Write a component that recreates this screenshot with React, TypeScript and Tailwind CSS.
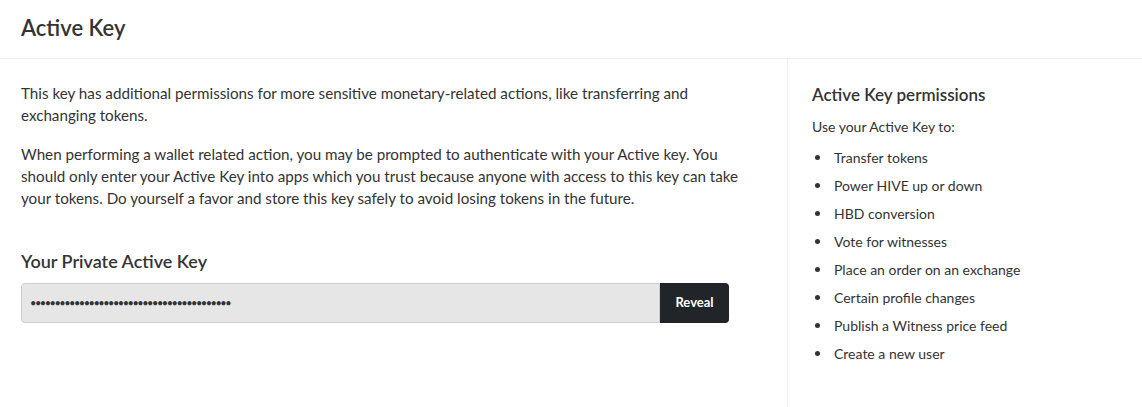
const permissions = [
  'Transfer tokens',
  'Power HIVE up or down',
  'HBD conversion',
  'Vote for witnesses',
  'Place an order on an exchange',
  'Certain profile changes',
  'Publish a Witness price feed',
  'Create a new user',
];

export default function App() {
  return (
    <div
      className="w-[1142px] h-[407px] bg-white text-[#333] overflow-hidden"
      style={{ fontFamily: '"Lato", "Noto Sans", sans-serif' }}
    >
      <div className="h-[59px] border-b border-[#eeeeee] px-[21px] flex items-center">
        <h1 className="text-[22px] font-semibold text-[#333] leading-none -mt-[2px]">Active Key</h1>
      </div>
      <div className="flex h-[348px]">
        <div className="flex-1 px-[21px] pt-[23px]">
          <p className="text-[15.2px] leading-[22px] whitespace-nowrap">
            This key has additional permissions for more sensitive monetary-related actions, like transferring and
            <br />
            exchanging tokens.
          </p>
          <p className="text-[15.2px] leading-[22px] mt-[17px] whitespace-nowrap">
            When performing a wallet related action, you may be prompted to authenticate with your Active key. You
            <br />
            should only enter your Active Key into apps which you trust because anyone with access to this key can take
            <br />
            your tokens. Do yourself a favor and store this key safely to avoid losing tokens in the future.
          </p>
          <h2 className="text-[18px] font-semibold mt-[40px] leading-[24px]">Your Private Active Key</h2>
          <div className="flex mt-[10px] w-[708px] h-[40px]">
            <div className="flex-1 bg-[#e6e6e6] border border-[#cccccc] rounded-l-[4px] flex items-center px-[8px] text-[11px] tracking-[-1.5px] text-[#333]">
              •••••••••••••••••••••••••••••••••••••••••
            </div>
            <button className="w-[69px] bg-[#212529] text-white text-[13px] font-bold rounded-r-[4px]">
              Reveal
            </button>
          </div>
        </div>
        <div className="w-[355px] border-l border-[#eeeeee] pl-[24px] pt-[24px]">
          <h3 className="text-[17px] font-semibold leading-[24px]">Active Key permissions</h3>
          <p className="text-[14px] mt-[10px] leading-[20px]">Use your Active Key to:</p>
          <ul className="mt-[6px]">
            {permissions.map((p) => (
              <li key={p} className="flex items-center h-[28px] text-[14px]">
                <span className="w-[5px] h-[5px] rounded-full bg-[#333] ml-[3px] mr-[14px]" />
                {p}
              </li>
            ))}
          </ul>
        </div>
      </div>
    </div>
  );
}
